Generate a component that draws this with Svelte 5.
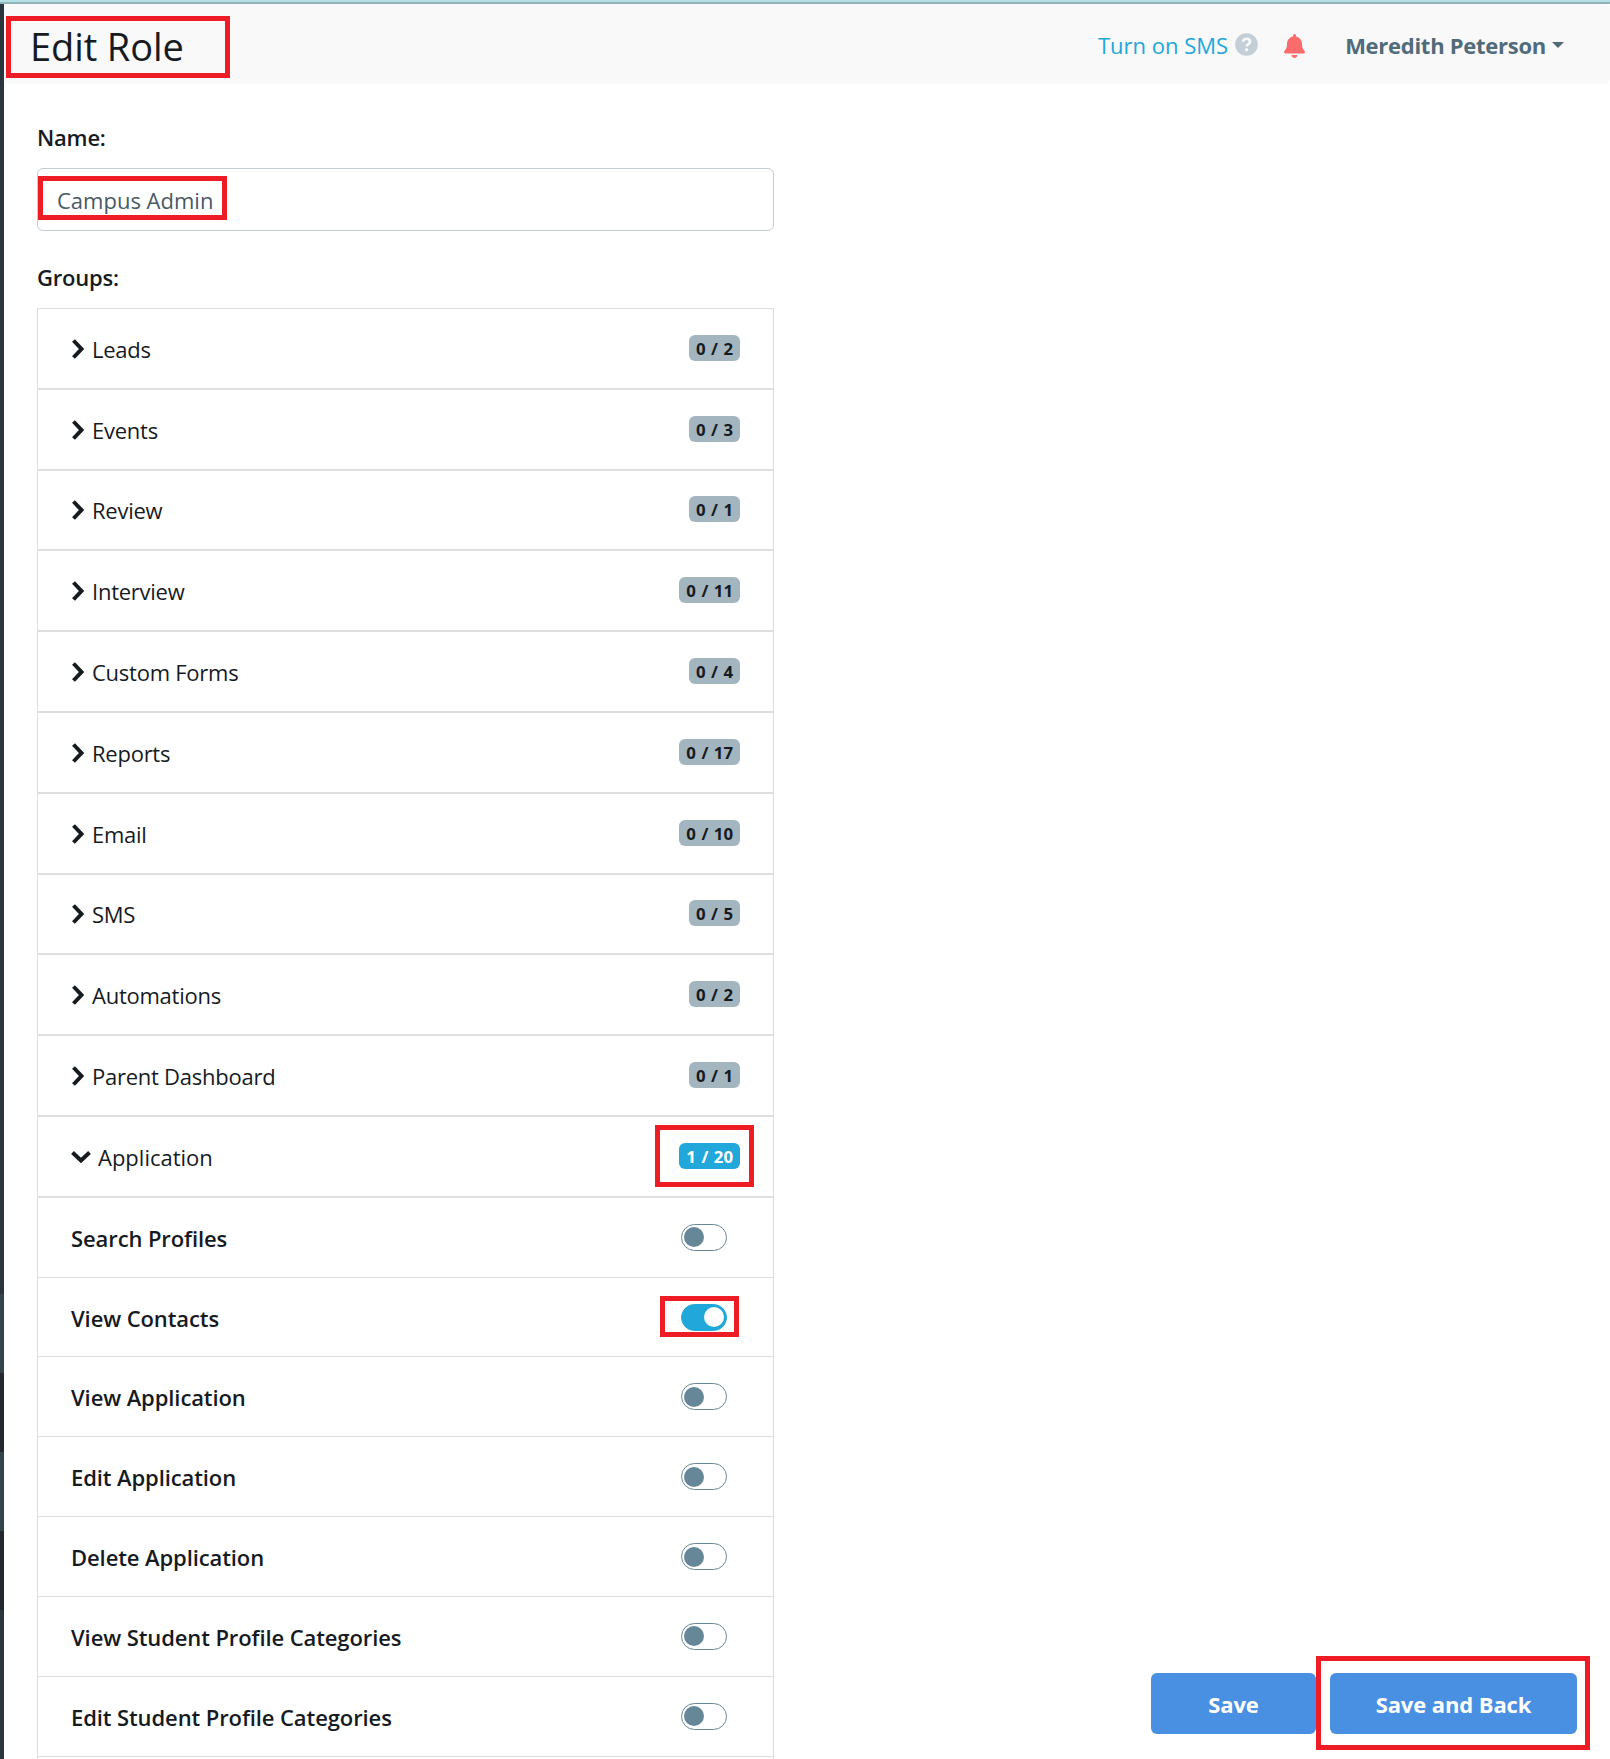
<script lang="ts">
	interface Group {
		name: string;
		used: number;
		total: number;
	}

	interface Permission {
		label: string;
		enabled: boolean;
	}

	const groups: Group[] = [
		{ name: 'Leads', used: 0, total: 2 },
		{ name: 'Events', used: 0, total: 3 },
		{ name: 'Review', used: 0, total: 1 },
		{ name: 'Interview', used: 0, total: 11 },
		{ name: 'Custom Forms', used: 0, total: 4 },
		{ name: 'Reports', used: 0, total: 17 },
		{ name: 'Email', used: 0, total: 10 },
		{ name: 'SMS', used: 0, total: 5 },
		{ name: 'Automations', used: 0, total: 2 },
		{ name: 'Parent Dashboard', used: 0, total: 1 },
		{ name: 'Application', used: 1, total: 20 }
	];

	let permissions: Permission[] = $state([
		{ label: 'Search Profiles', enabled: false },
		{ label: 'View Contacts', enabled: true },
		{ label: 'View Application', enabled: false },
		{ label: 'Edit Application', enabled: false },
		{ label: 'Delete Application', enabled: false },
		{ label: 'View Student Profile Categories', enabled: false },
		{ label: 'Edit Student Profile Categories', enabled: false }
	]);

	let roleName = $state('Campus Admin');
	let openGroup = $state('Application');
</script>

<div class="page">
	<div class="top-strip"></div>
	<div class="body">
		<aside class="sidebar">
			<div class="side-top"></div>
			<div class="side-item light"></div>
			<div class="side-item"></div>
			<div class="side-item light"></div>
			<div class="side-item"></div>
		</aside>

		<main>
			<header>
				<h1>Edit Role</h1>
				<a class="sms" href="#sms">Turn on SMS</a>
				<svg class="help" viewBox="0 0 512 512">
					<circle cx="256" cy="256" r="252" fill="#c3ced6" />
					<path d="M176 192c10-42 38-64 82-64 46 0 78 26 78 66 0 52-78 54-78 106" fill="none" stroke="#f9f9f9" stroke-width="58" />
					<circle cx="258" cy="373" r="38" fill="#f9f9f9" />
				</svg>
				<svg class="bell" viewBox="0 0 448 512">
					<path fill="#fa6b6b" d="M224 512c35 0 64-29 64-64H160c0 35 29 64 64 64zm215-150c-19-21-55-52-55-154 0-78-54-140-128-155V32a32 32 0 1 0-64 0v21C118 68 64 130 64 208c0 102-36 133-55 154-6 6-9 14-9 22 0 16 13 32 32 32h384c19 0 32-16 32-32 0-8-3-16-9-22z" />
				</svg>
				<span class="user">Meredith Peterson</span>
				<span class="caret"></span>
			</header>

			<div class="form">
				<label class="field-label" for="role-name">Name:</label>
				<input id="role-name" type="text" bind:value={roleName} />
				<div class="field-label groups-label">Groups:</div>

				<div class="groups">
					{#each groups as group}
						<div class="group" onclick={() => (openGroup = openGroup === group.name ? '' : group.name)} role="presentation">
							{#if openGroup === group.name}
								<svg class="chevron down" viewBox="0 0 20 12">
									<path d="M1.5 1.5l8.5 8 8.5-8" />
								</svg>
							{:else}
								<svg class="chevron" viewBox="0 0 12 20">
									<path d="M1.5 1.5l8 8.5-8 8.5" />
								</svg>
							{/if}
							<span class="group-name">{group.name}</span>
							<span class="badge" class:active={group.used > 0}>{group.used} / {group.total}</span>
						</div>
					{/each}
					{#if openGroup === 'Application'}
						<div class="permissions">
							{#each permissions as permission}
								<div class="permission">
									<span>{permission.label}</span>
									<button
										class="toggle"
										class:on={permission.enabled}
										aria-label={permission.label}
										onclick={() => (permission.enabled = !permission.enabled)}
									><i></i></button>
								</div>
							{/each}
							<div class="permission"></div>
						</div>
					{/if}
				</div>
			</div>
		</main>
	</div>

	<div class="actions">
		<button class="save">Save</button>
		<button class="save back">Save and Back</button>
	</div>

	<div class="mark title-mark"></div>
	<div class="mark name-mark"></div>
	<div class="mark badge-mark"></div>
	<div class="mark toggle-mark"></div>
	<div class="mark save-mark"></div>
</div>

<style>
	:global(body) {
		margin: 0;
		background: #fff;
	}
	.page {
		position: relative;
		width: 1610px;
		height: 1759px;
		overflow: hidden;
		box-sizing: border-box;
		font-family: 'Open Sans', 'Noto Sans', sans-serif;
		font-size: 22px;
		color: #161b1f;
	}
	.page :global(*) {
		box-sizing: border-box;
	}
	.top-strip {
		height: 4px;
		background: #b3dfe5;
		border-bottom: 2px solid #8fb3b7;
	}
	.body {
		display: flex;
		height: 1755px;
	}
	.sidebar {
		width: 4px;
		background: #29363d;
	}
	.side-top {
		height: 1290px;
	}
	.side-item {
		height: 79px;
		background: #22292d;
	}
	.side-item.light {
		background: #33454c;
	}
	main {
		flex: 1;
		min-width: 0;
	}
	header {
		display: flex;
		align-items: center;
		height: 80px;
		padding: 0 46px 0 26px;
		background: #f9f9f9;
		border-radius: 6px;
	}
	h1 {
		margin: 3px auto 0 0;
		font-size: 38px;
		font-weight: 400;
		line-height: 50px;
		letter-spacing: -0.1px;
	}
	.sms {
		color: #22a7da;
		text-decoration: none;
		margin-top: 2px;
	}
	.help {
		width: 23px;
		height: 23px;
		margin: 1px 26px 0 7px;
	}
	.bell {
		width: 21px;
		height: 24px;
		margin: 3px 40px 0 0;
	}
	.user {
		margin-top: 2px;
		font-weight: 700;
		color: #506b79;
		letter-spacing: -0.27px;
	}
	.caret {
		margin: 2px 0 0 6px;
		border: 6px solid transparent;
		border-top-color: #506b79;
		border-bottom: 0;
	}
	.form {
		width: 737px;
		margin: 37px 0 0 33px;
	}
	.field-label {
		display: block;
		height: 47px;
		font-weight: 600;
		line-height: 32px;
		letter-spacing: -0.2px;
	}
	input {
		display: block;
		width: 100%;
		height: 63px;
		padding: 1px 20px 0 19px;
		border: 1px solid #c2ced6;
		border-radius: 6px;
		background: #fff;
		color: #495a64;
		font: inherit;
		outline: none;
	}
	.groups-label {
		height: 77px;
		padding-top: 30px;
	}
	.groups {
		border: solid #dedede;
		border-width: 0 1px;
	}
	.group {
		display: flex;
		align-items: center;
		height: 80.8px;
		padding: 0 33px 0 34px;
		border: solid #dedede;
		border-width: 1px 0;
	}
	.chevron {
		width: 12px;
		height: 20px;
		margin: 1px 8px 0 0;
		fill: none;
		stroke: #161b1f;
		stroke-width: 4;
	}
	.chevron.down {
		width: 20px;
		height: 12px;
		margin: 1px 7px 0 -1px;
	}
	.group-name {
		margin-top: 1px;
		letter-spacing: -0.25px;
	}
	.chevron.down + .group-name {
		letter-spacing: 0;
	}
	.badge {
		display: flex;
		height: 26px;
		margin: 0 0 1px auto;
		padding: 0 7px;
		border-radius: 6px;
		background: #a3b5bf;
		font-size: 16.8px;
		font-weight: 700;
		line-height: 28px;
		word-spacing: 1.1px;
		white-space: pre;
	}
	.badge.active {
		background: #22a7da;
		color: #fff;
	}
	.permissions {
		border-top: 1px solid #dedede;
	}
	.permission {
		display: flex;
		align-items: center;
		justify-content: space-between;
		height: 79.85px;
		padding: 0 46px 0 33px;
		border-bottom: 1px solid #dedede;
		font-weight: 600;
		letter-spacing: -0.1px;
	}
	.permission span {
		margin-top: 1px;
	}
	.toggle {
		display: flex;
		align-items: center;
		width: 46px;
		height: 27px;
		padding: 0 2px;
		border: 1px solid #668797;
		border-radius: 14px;
		background: #fff;
	}
	.toggle i {
		width: 20px;
		height: 20px;
		border-radius: 50%;
		background: #668797;
	}
	.toggle.on {
		justify-content: flex-end;
		border-color: #22a7da;
		background: #22a7da;
	}
	.toggle.on i {
		background: #fff;
	}
	.actions {
		position: absolute;
		right: 33px;
		bottom: 25px;
		display: flex;
		gap: 14px;
	}
	.save {
		width: 165px;
		height: 61px;
		padding: 1px 0 0;
		border: 0;
		border-radius: 6px;
		background: #4a90e2;
		color: #fff;
		font: inherit;
		font-weight: 700;
		letter-spacing: -0.1px;
	}
	.save.back {
		width: 247px;
	}

	/* callout frames */
	.mark {
		position: absolute;
		border: 5px solid #ee1c25;
		pointer-events: none;
	}
	.title-mark {
		left: 6px;
		top: 16px;
		width: 224px;
		height: 62px;
	}
	.name-mark {
		left: 38px;
		top: 176px;
		width: 189px;
		height: 44px;
	}
	.badge-mark {
		left: 655px;
		top: 1125px;
		width: 99px;
		height: 62px;
	}
	.toggle-mark {
		left: 660px;
		top: 1296px;
		width: 79px;
		height: 41px;
	}
	.save-mark {
		left: 1316px;
		top: 1656px;
		width: 274px;
		height: 94px;
	}
</style>
